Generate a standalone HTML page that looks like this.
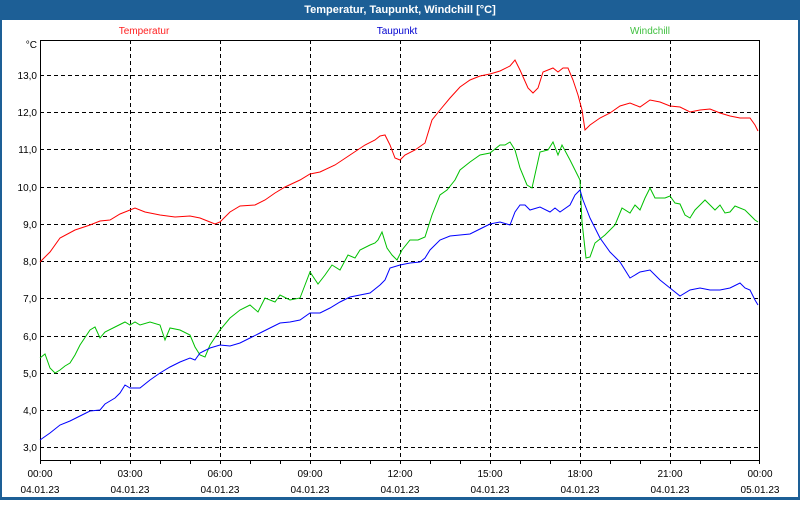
<!DOCTYPE html>
<html><head><meta charset="utf-8"><style>
body{margin:0;width:800px;height:500px;overflow:hidden;background:#fff;font-family:"Liberation Sans",sans-serif}
</style></head><body>
<svg width="800" height="500" xmlns="http://www.w3.org/2000/svg" font-family="Liberation Sans, sans-serif" font-size="10">
<rect x="0" y="0" width="800" height="500" fill="#1d5f96"/>
<rect x="2" y="20" width="796" height="477" fill="#fff"/>
<text x="400" y="13" fill="#fff" font-weight="bold" font-size="11" text-anchor="middle">Temperatur, Taupunkt, Windchill [°C]</text>
<text x="144" y="34" fill="#ff2020" text-anchor="middle">Temperatur</text>
<text x="397" y="34" fill="#0000d0" text-anchor="middle">Taupunkt</text>
<text x="650" y="34" fill="#40c040" text-anchor="middle">Windchill</text>
<g stroke="#000" stroke-dasharray="4,3" stroke-width="1">
<path d="M40 75.5H760M40 112.5H760M40 149.5H760M40 187.5H760M40 224.5H760M40 261.5H760M40 298.5H760M40 336.5H760M40 373.5H760M40 410.5H760M40 447.5H760"/>
<path d="M130.5 40V460M220.5 40V460M310.5 40V460M400.5 40V460M490.5 40V460M580.5 40V460M670.5 40V460"/>
</g>
<rect x="40.5" y="40.5" width="719" height="420" fill="none" stroke="#000"/>
<g stroke="#000"><path d="M40.5 460v4M70.5 460v4M100.5 460v4M130.5 460v4M160.5 460v4M190.5 460v4M220.5 460v4M250.5 460v4M280.5 460v4M310.5 460v4M340.5 460v4M370.5 460v4M400.5 460v4M430.5 460v4M460.5 460v4M490.5 460v4M520.5 460v4M550.5 460v4M580.5 460v4M610.5 460v4M640.5 460v4M670.5 460v4M700.5 460v4M730.5 460v4M759.5 460v4"/></g>
<g text-anchor="end" fill="#000">
<text x="37" y="48">°C</text>
<text x="37" y="79">13,0</text><text x="37" y="116">12,0</text><text x="37" y="153">11,0</text><text x="37" y="191">10,0</text><text x="37" y="228">9,0</text><text x="37" y="265">8,0</text><text x="37" y="302">7,0</text><text x="37" y="340">6,0</text><text x="37" y="377">5,0</text><text x="37" y="414">4,0</text><text x="37" y="451">3,0</text>
</g>
<g text-anchor="middle" fill="#000">
<text x="40" y="477">00:00</text><text x="130" y="477">03:00</text><text x="220" y="477">06:00</text><text x="310" y="477">09:00</text><text x="400" y="477">12:00</text><text x="490" y="477">15:00</text><text x="580" y="477">18:00</text><text x="670" y="477">21:00</text><text x="760" y="477">00:00</text>
<text x="40" y="493">04.01.23</text><text x="130" y="493">04.01.23</text><text x="220" y="493">04.01.23</text><text x="310" y="493">04.01.23</text><text x="400" y="493">04.01.23</text><text x="490" y="493">04.01.23</text><text x="580" y="493">04.01.23</text><text x="670" y="493">04.01.23</text><text x="760" y="493">05.01.23</text>
</g>
<g fill="none" stroke-width="1">
<polyline stroke="#ff0000" points="40,262 50,252 60,238 75,230 90,225 100,221 110,220 120,214 130,210 135,208 145,212 160,215 175,217 190,216 200,218 210,222 215,224 220,222 230,212 240,206 255,205 265,200 275,193 285,187 300,180 310,174 320,172 335,165 350,155 365,145 375,140 380,136 385,135 390,145 395,158 400,160 405,155 415,150 425,143 432,120 440,110 450,98 460,87 470,80 480,76 490,74 500,71 510,66 515,60 520,70 528,88 533,93 538,88 543,72 553,68 558,72 563,68 568,68 573,80 578,95 582,110 585,130 590,125 600,118 610,113 620,106 630,103 640,107 650,100 660,102 670,106 680,107 690,112 700,110 710,109 720,113 730,116 740,118 750,118 755,125 758,131"/>
<polyline stroke="#00c000" points="40,358 45,354 50,368 55,373 60,370 65,366 70,363 75,355 80,345 90,330 95,327 100,338 105,332 115,327 125,322 130,325 135,322 140,325 150,322 160,325 165,340 170,328 180,330 190,335 195,347 200,355 205,357 210,345 220,330 230,318 240,310 250,305 258,312 265,298 275,302 280,295 290,300 300,298 305,285 310,272 318,284 325,275 332,265 340,270 348,255 355,258 360,250 370,245 375,243 378,240 382,232 387,248 392,255 397,260 402,250 410,240 418,240 425,237 432,215 440,195 447,190 455,180 460,170 470,162 480,155 490,153 500,145 505,145 510,142 515,150 520,168 527,185 532,188 540,152 548,150 553,142 558,155 562,145 570,160 575,170 580,180 582,222 586,258 590,257 595,243 605,235 615,225 622,208 630,213 635,205 640,210 645,198 650,188 655,198 665,198 670,196 675,203 680,204 685,215 690,218 695,210 700,205 705,200 715,210 720,205 725,213 730,212 735,206 745,210 750,215 755,220 758,222"/>
<polyline stroke="#0000ff" points="40,440 50,433 60,425 70,421 80,416 90,411 100,410 105,404 115,398 120,393 125,385 130,388 140,388 150,380 160,373 170,367 180,362 190,358 195,360 200,353 210,348 220,345 230,346 240,343 250,338 260,333 270,328 280,323 290,322 300,320 310,313 320,313 330,308 340,302 350,297 360,295 370,293 380,285 385,280 390,268 400,265 410,263 420,262 425,258 430,250 440,240 450,236 460,235 470,234 480,229 490,224 500,222 510,225 515,212 520,205 525,205 530,210 540,207 550,212 555,208 560,212 570,205 575,195 580,190 583,200 590,218 600,238 610,252 620,262 630,278 640,272 650,270 660,280 670,288 680,296 690,290 700,288 710,290 720,290 730,288 740,283 745,288 750,290 755,300 758,305"/>
</g>
</svg>
</body></html>
